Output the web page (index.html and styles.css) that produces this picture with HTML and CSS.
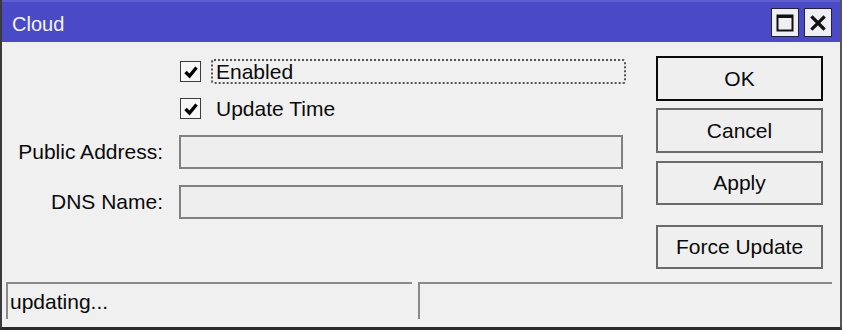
FILE: index.html
```html
<!DOCTYPE html>
<html>
<head>
<meta charset="utf-8">
<title>Cloud</title>
<link rel="stylesheet" href="styles.css">
</head>
<body>
<div class="window">
  <div class="titlebar">
    <span class="title">Cloud</span>
    <div class="tbuttons">
      <div class="tbtn">
        <svg width="18" height="18" viewBox="0 0 18 18"><rect x="1.5" y="1.5" width="15" height="15" fill="none" stroke="#111" stroke-width="2"/><rect x="1" y="1" width="16" height="3" fill="#111"/></svg>
      </div>
      <div class="tbtn">
        <svg width="16" height="16" viewBox="0 0 16 16"><path d="M2.5 2.5 L13.5 13.5 M13.5 2.5 L2.5 13.5" stroke="#111" stroke-width="3.2" stroke-linecap="square"/></svg>
      </div>
    </div>
  </div>
  <div class="main">
    <div class="form">
      <div class="checkrow">
        <span class="checkbox"><svg width="18" height="18" viewBox="0 0 18 18"><path d="M3.5 9 L7.5 13 L14.5 4.5" fill="none" stroke="#000" stroke-width="3.4"/></svg></span>
        <span class="checklabel focused">Enabled</span>
      </div>
      <div class="checkrow second">
        <span class="checkbox"><svg width="18" height="18" viewBox="0 0 18 18"><path d="M3.5 9 L7.5 13 L14.5 4.5" fill="none" stroke="#000" stroke-width="3.4"/></svg></span>
        <span class="checklabel">Update Time</span>
      </div>
      <div class="field first">
        <label class="flabel">Public Address:</label>
        <div class="input"></div>
      </div>
      <div class="field">
        <label class="flabel">DNS Name:</label>
        <div class="input"></div>
      </div>
    </div>
    <div class="buttons">
      <div class="btn default">OK</div>
      <div class="btn b-cancel">Cancel</div>
      <div class="btn b-apply">Apply</div>
      <div class="btn b-force">Force Update</div>
    </div>
  </div>
  <div class="status">
    <div class="panel left">updating...</div>
    <div class="panel right"></div>
  </div>
</div>
</body>
</html>
```

FILE: styles.css
```css
html, body {
  margin: 0;
  padding: 0;
  background: #ffffff;
}
body {
  font-family: "Liberation Sans", Arial, sans-serif;
  color: #0a0a0a;
}
.window {
  width: 838px;
  height: 327px;
  background: #f0f0f0;
  border-left: 2px solid #3a3a3a;
  border-right: 2px solid #555;
  border-bottom: 3px solid #2a2a2a;
  display: flex;
  flex-direction: column;
}
.titlebar {
  height: 40px;
  border-top: 2px solid #5e5ed0;
  background: #4a49c6;
  display: flex;
  align-items: center;
  justify-content: space-between;
  padding: 0 8px 0 10px;
}
.title {
  color: #f4f4ff;
  font-size: 20px;
  margin-top: 4px;
}
.tbuttons {
  display: flex;
  gap: 5px;
  margin-top: 1px;
}
.tbtn {
  width: 26px;
  height: 27px;
  background: #eeeef4;
  border: 1px solid #202040;
  display: flex;
  align-items: center;
  justify-content: center;
}
.main {
  height: 240px;
  display: flex;
}
.form {
  flex: 1;
  padding-top: 17px;
}
.checkrow {
  display: flex;
  align-items: center;
  height: 25px;
  padding-left: 178px;
}
.checkrow.second {
  margin-top: 12px;
}
.checkbox {
  width: 19px;
  height: 19px;
  border: 1px solid #3c3c3c;
  background: #f8f8f8;
  display: flex;
  align-items: center;
  justify-content: center;
}
.checkbox svg {
  display: block;
}
.checklabel {
  margin-left: 10px;
  font-size: 21px;
  line-height: 21px;
  padding: 0 0 0 3px;
  height: 21px;
  border: 2px dotted transparent;
  width: 408px;
}
.checklabel.focused {
  border-color: #555;
  border-radius: 3px;
}
.field {
  display: flex;
  align-items: center;
  margin-top: 16px;
}
.field.first {
  margin-top: 14px;
}
.flabel {
  width: 161px;
  text-align: right;
  font-size: 21px;
  margin-right: 16px;
}
.input {
  width: 440px;
  height: 30px;
  border: 2px solid #808080;
  background: #eeeeee;
}
.buttons {
  width: 167px;
  margin-right: 17px;
  padding-top: 14px;
  display: flex;
  flex-direction: column;
}
.btn {
  height: 41px;
  border: 2px solid #6a6a6a;
  background: #efefef;
  font-size: 21px;
  display: flex;
  align-items: center;
  justify-content: center;
  box-sizing: content-box;
}
.btn.default {
  border-color: #0a0a0a;
}
.b-cancel {
  margin-top: 7px;
}
.b-apply {
  margin-top: 8px;
  height: 40px;
}
.b-force {
  margin-top: 20px;
  height: 40px;
}
.status {
  height: 37px;
  display: flex;
  gap: 6px;
  padding-left: 4px;
  padding-right: 8px;
}
.panel {
  border-top: 2px solid #8a8a8a;
  border-left: 2px solid #8a8a8a;
  font-size: 21px;
  display: flex;
  align-items: center;
  padding-left: 2px;
}
.panel.left {
  width: 402px;
}
.panel.right {
  flex: 1;
}
```
